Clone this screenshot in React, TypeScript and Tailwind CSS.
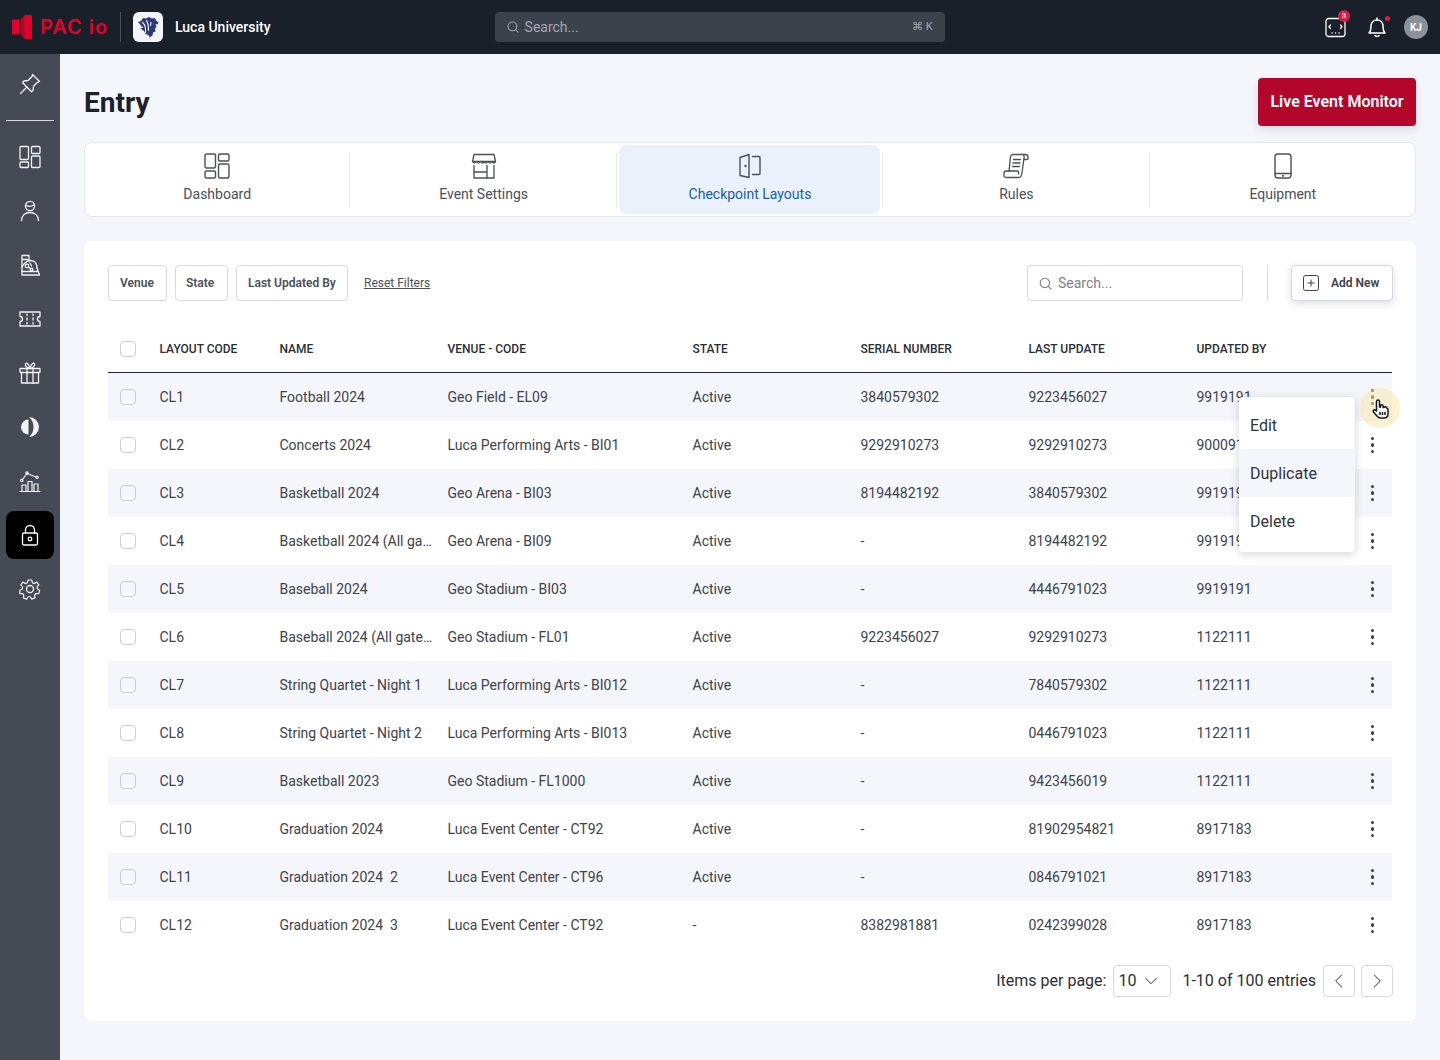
import React from "react";

const rows = [
  ["CL1", "Football 2024", "Geo Field - EL09", "Active", "3840579302", "9223456027", "9919191"],
  ["CL2", "Concerts 2024", "Luca Performing Arts - BI01", "Active", "9292910273", "9292910273", "9000919"],
  ["CL3", "Basketball 2024", "Geo Arena - BI03", "Active", "8194482192", "3840579302", "9919191"],
  ["CL4", "Basketball 2024 (All gates)", "Geo Arena - BI09", "Active", "-", "8194482192", "9919191"],
  ["CL5", "Baseball 2024", "Geo Stadium - BI03", "Active", "-", "4446791023", "9919191"],
  ["CL6", "Baseball 2024 (All gates)", "Geo Stadium - FL01", "Active", "9223456027", "9292910273", "1122111"],
  ["CL7", "String Quartet - Night 1", "Luca Performing Arts - BI012", "Active", "-", "7840579302", "1122111"],
  ["CL8", "String Quartet - Night 2", "Luca Performing Arts - BI013", "Active", "-", "0446791023", "1122111"],
  ["CL9", "Basketball 2023", "Geo Stadium - FL1000", "Active", "-", "9423456019", "1122111"],
  ["CL10", "Graduation 2024", "Luca Event Center - CT92", "Active", "-", "81902954821", "8917183"],
  ["CL11", "Graduation 2024  2", "Luca Event Center - CT96", "Active", "-", "0846791021", "8917183"],
  ["CL12", "Graduation 2024  3", "Luca Event Center - CT92", "-", "8382981881", "0242399028", "8917183"],
];

const S = ({ children, size = 24, className = "", sw = 1.5 }: { children: React.ReactNode; size?: number; className?: string; sw?: number }) => (
  <svg width={size} height={size} viewBox="0 0 24 24" fill="none" stroke="currentColor" strokeWidth={sw} strokeLinecap="round" strokeLinejoin="round" className={className}>
    {children}
  </svg>
);

const DashIcon = ({ size = 24 }: { size?: number }) => (
  <S size={size} sw={1.3}>
    <rect x="2" y="1.5" width="8.500" height="13" rx="1" />
    <rect x="13.500" y="1.500" width="8.500" height="7" rx="1" />
    <rect x="2" y="17" width="8.500" height="5.500" rx="1" />
    <rect x="13.500" y="11" width="8.500" height="11.500" rx="1" />
  </S>
);

const nav: React.ReactNode[] = [
  <DashIcon key="a" />,
  <S key="b" sw={1.3}>
    <circle cx="12" cy="7" r="4.600" />
    <path d="M7.800 6.200c2.500 1.600 5.600 1.400 8.200-.2" />
    <path d="M3.500 21.500c0-5 3.600-8 8.500-8s8.500 3 8.500 8" />
  </S>,
  <S key="c" sw={1.3}>
    <path d="M4 14V2.500h7V7" />
    <path d="M4 6.500h6" />
    <path d="M4 14c0 0 3-6.500 9-6.500 4 0 6 3.500 6 7.500" />
    <circle cx="9" cy="13" r="1.800" />
    <circle cx="13.500" cy="16.500" r="1.300" />
    <path d="M10.500 14.500l2 1M12 10l1.500 3" />
    <path d="M4 14v8h17.500l-2.500-7" />
    <path d="M4 18.500h16" />
  </S>,
  <S key="d" sw={1.3}>
    <path d="M2 5h20v4.500a2.500 2.500 0 0 0 0 5V19H2v-4.500a2.500 2.500 0 0 0 0-5z" />
    <path d="M9 7v1.500M9 11v2M9 15.500V17M15 7v1.500M15 11v2M15 15.500V17" />
  </S>,
  <S key="e" sw={1.3}>
    <rect x="2" y="7.500" width="20" height="4" rx=".5" />
    <path d="M3.500 11.500V22h17V11.500" />
    <path d="M9 7.500V22M15 7.500V22" />
    <path d="M12 7.500C9.500 7 6.500 5 7.500 3c1-1.800 3.500-.5 4.500 4.500 1-5 3.500-6.300 4.500-4.500 1 2-2 4-4.500 4.500z" />
  </S>,
  <svg key="f" width="24" height="24" viewBox="0 0 24 24" fill="none">
    <path d="M10.500 4.500a7.500 7.500 0 0 0 0 15z" fill="currentColor" />
    <path d="M11 2a10 10 0 0 1 0 20c3-2.500 4.500-6 4.500-10S14 4.500 11 2z" fill="currentColor" />
  </svg>,
  <S key="g" sw={1.2}>
    <path d="M2 22.500h20" />
    <rect x="4" y="16" width="4" height="6.500" />
    <rect x="10" y="12.500" width="4" height="10" />
    <rect x="16" y="15" width="4" height="7.500" />
    <path d="M4.500 10.500L9 4.500l9 3.500" />
    <circle cx="3.800" cy="11.500" r="1.200" />
    <circle cx="9" cy="4" r="1.200" />
    <circle cx="19" cy="8.300" r="1.200" />
  </S>,
  <S key="h" sw={1.3}>
    <rect x="4.500" y="10" width="15" height="12" rx="1.500" />
    <path d="M7.500 10V7a4.500 4.500 0 0 1 9 0v3" />
    <circle cx="12" cy="16" r="1.800" />
  </S>,
  <S key="i" sw={1.3}>
    <circle cx="12" cy="12" r="3.500" />
    <path d="M10 2h4l.6 3 2.300 1 2.600-1.700 2.400 3.200-2 2.100.3 2.400 2.600 1.500-1.200 3.800-3-.3-1.600 1.900.6 3-3.700 1.300-1.600-2.600h-2.400l-1.600 2.600-3.700-1.300.6-3-1.600-1.900-3 .3L.8 13.500l2.600-1.500.3-2.400-2-2.100L4.100 4.300 6.700 6 9 5z" transform="translate(1.200 1.200) scale(.9)" />
  </S>,
];

const tabs: [string, React.ReactNode, boolean?][] = [
  ["Dashboard", <svg key="d" width="26" height="26" viewBox="0 0 26 26" fill="none" stroke="currentColor" strokeWidth="1.400"><rect x="1" y="1" width="10.500" height="14" rx="1.500" /><rect x="14.500" y="1" width="10.500" height="7" rx="1.500" /><rect x="1" y="18" width="10.500" height="7" rx="1.500" /><rect x="14.500" y="11" width="10.500" height="14" rx="1.500" /></svg>],
  ["Event Settings", <svg key="e" width="26" height="26" viewBox="0 0 26 26" fill="none" stroke="currentColor" strokeWidth="1.300" strokeLinecap="round" strokeLinejoin="round"><path d="M3 1.500h20l1.500 7H1.500z" /><path d="M1.500 8.500c1.200 2 2.800 2 4 0 1.200 2 2.800 2 4 0 1.200 2 2.800 2 3.500 0 1.200 2 2.800 2 4 0 1.200 2 2.800 2 4 0 1 2 2.500 2 3.500 0" /><path d="M3 12.500V25h20V12.500" /><path d="M3 19h13M16 12.500V25" /></svg>],
  ["Checkpoint Layouts", <svg key="c" width="26" height="26" viewBox="0 0 26 26" fill="none" stroke="#4b5059" strokeWidth="1.400" strokeLinecap="round" strokeLinejoin="round"><path d="M3 4.500L12 1.500v23l-9-2z" /><path d="M15.500 3.500H22a1 1 0 0 1 1 1v16a1 1 0 0 1-1 1h-6.500" /><circle cx="8.500" cy="13" r=".5" fill="#4b5059" /></svg>, true],
  ["Rules", <svg key="r" width="26" height="26" viewBox="0 0 26 26" fill="none" stroke="currentColor" strokeWidth="1.300" strokeLinecap="round" strokeLinejoin="round"><path d="M6 18.500L7.500 3.500A2.500 2.500 0 0 1 10 1.500h12.500A2.500 2.500 0 0 1 25 4v1.500a1 1 0 0 1-1 1h-3" /><path d="M20 1.500c1 .5 1.300 2 1 3.500l-2 15c-.3 3-1.500 4.500-3.500 4.500H3a2 2 0 0 1-2-2v-2.500a2 2 0 0 1 2-2h11c1.500 0 2 1.500 1.500 3" /><path d="M10.500 6.500h7M10 10h7M9.500 13.500h7" /></svg>],
  ["Equipment", <svg key="q" width="26" height="26" viewBox="0 0 26 26" fill="none" stroke="currentColor" strokeWidth="1.400" strokeLinecap="round"><rect x="5" y="1" width="16" height="24" rx="3" /><path d="M5 20.500h16" /><circle cx="13" cy="22.800" r=".4" fill="currentColor" /></svg>],
];

const Check = () => <span className="block h-4 w-4 rounded-[4px] border border-[#c9ccd4]" />;

const Dots = () => (
  <span className="flex flex-col gap-[3px]">
    <span className="h-[3.500px] w-[3.500px] rounded-full bg-[#3d424b]" />
    <span className="h-[3.500px] w-[3.500px] rounded-full bg-[#3d424b]" />
    <span className="h-[3.500px] w-[3.500px] rounded-full bg-[#3d424b]" />
  </span>
);

const cols = "grid grid-cols-[51.5px_120px_168px_245px_168px_168px_168px_1fr] items-center";

export default function App() {
  return (
    <div className="flex min-h-[1060px] flex-col bg-[#f5f6fb] font-['Roboto',sans-serif] text-[#3d424b]">
      <header className="flex h-[54px] shrink-0 items-center bg-[#19202a] pl-3 pr-3">
        <svg width="20" height="24" viewBox="0 0 20 24" fill="#e4002b" className="shrink-0">
          <path d="M0 4.500h7.500v15H0z" />
          <path d="M8.500 4.200L12 1h7a1 1 0 0 1 1 1v20a1 1 0 0 1-1 1h-7l-3.500-3.200z" fill="#a80a28" />
          <path d="M12.500 0H19a1 1 0 0 1 1 1v22a1 1 0 0 1-1 1h-6.500z" />
        </svg>
        <span className="ml-2 w-[72px] font-['Inter',sans-serif] text-[20px] font-semibold leading-none tracking-[1px] text-[#e4002b]">PAC io</span>
        <span className="ml-2 h-[30px] w-px bg-[#4a4f59]" />
        <span className="ml-3 flex h-[30px] w-[30px] items-center justify-center rounded-md bg-[#f3f4fb]">
          <svg width="24" height="24" viewBox="0 0 24 24" fill="#2e3a75">
            <path d="M2 7l3-1 2-3 3 .5L13 2l3 1.500 3-.5 1 2.500 2.500 2-1 2-2-.5 1 3-1.500 1.500.5 3-2.500 1-.5 3-3 2-1-2.500-3-1-1.500-3-3-2 .5-3-1.500-1.500z" />
            <path d="M6 7c2.500 2 4 6 3.500 11M10.500 5c1.500 3 2.500 6 2 11M15 7l-.5 4M7 12l-3 1" stroke="#f3f4fb" strokeWidth="1.100" fill="none" />
          </svg>
        </span>
        <span className="ml-3 text-sm font-medium text-white">Luca University</span>
        <div className="ml-[224px] flex h-[30px] w-[450px] items-center rounded bg-[#3c424c] pl-[11px] pr-3 text-[#a2a6ae]">
          <S size={14} sw={1.800}><circle cx="11" cy="11" r="7.500" /><path d="M21 21l-4.500-4.500" /></S>
          <span className="ml-[5px] text-sm">Search...</span>
          <span className="ml-auto text-[11px]">⌘ K</span>
        </div>
        <div className="ml-auto flex items-center">
          <span className="relative text-white">
            <svg width="22" height="22" viewBox="0 0 22 22" fill="none" stroke="currentColor" strokeWidth="1.300" strokeLinecap="round" className="block">
              <rect x="1" y="2.500" width="19" height="18" rx="2.500" />
              <path d="M5.500 9L4 10.800 5.500 12.500M15.500 9L17 10.800 15.500 12.500M7 17h.2M10.500 17h.2M14 17h.2" />
            </svg>
            <span className="absolute -right-[3px] -top-[6px] flex h-3 w-3 items-center justify-center rounded-full bg-[#cf2242] text-[7px] font-medium text-white">3</span>
          </span>
          <span className="relative ml-[20px] text-white">
            <svg width="20" height="22" viewBox="0 0 20 22" fill="none" stroke="currentColor" strokeWidth="1.500" strokeLinecap="round" strokeLinejoin="round" className="block">
              <path d="M2 17c1.500-1.500 2-3 2-6.500C4 6.500 6.500 4 10 4s6 2.500 6 6.500c0 3.500.5 5 2 6.500z" />
              <path d="M10 2v2M8 19.500c.5 1.300 3.500 1.300 4 0" />
            </svg>
            <span className="absolute -right-[3px] top-0 h-[5px] w-[5px] rounded-full bg-[#e4193e]" />
          </span>
          <span className="ml-[17px] flex h-6 w-6 items-center justify-center rounded-full bg-[#8b9099] text-[10px] font-bold text-white">KJ</span>
        </div>
      </header>

      <div className="flex flex-1">
        <aside className="flex w-[60px] shrink-0 flex-col items-center bg-[#454a54] text-[#f2f3f5]">
          <div className="flex h-[67px] w-12 items-center justify-center border-b border-[#d9dbe0] pb-[6px]">
            <S sw={1.300}>
              <path d="M14.500 2.500l7 7-2 .8-4 4-.5 4-1.500 1.500-4.500-4.500L4.500 10.500 6 9l4-.5 4-4z" />
              <path d="M9 15l-6.500 6.500" />
            </S>
          </div>
          <div className="mt-[9px] flex flex-col">
            {nav.map((n, i) => (
              <div key={i} className={i === 7 ? "my-[3px] flex h-12 w-12 items-center justify-center rounded-lg bg-black text-white" : "flex h-[54px] w-12 items-center justify-center"}>
                {n}
              </div>
            ))}
          </div>
        </aside>

        <main className="flex-1 px-6 pt-6">
          <div className="flex h-12 items-center justify-between">
            <h1 className="pt-[2px] text-[28px] font-bold text-[#1c2129]">Entry</h1>
            <button className="h-12 w-[158px] rounded bg-[#b4062b] text-base font-semibold text-white shadow-[0_4px_10px_rgba(30,40,60,0.12)]">Live Event Monitor</button>
          </div>

          <div className="mt-4 h-[75px] rounded-lg border border-[#e6e8ee] bg-white py-0.5">
            <div className="-mx-px grid grid-cols-5">
              {tabs.map(([label, icon, active], i) => (
                <div key={label} className="relative flex items-center justify-center">
                  <div className={active ? "flex h-[69px] w-[261px] flex-col items-center rounded-lg bg-[#eaf1fb] pt-[8px] text-[#1a5cb0]" : "flex h-[69px] w-full flex-col items-center pt-[8px] text-[#4b5059]"}>
                    {icon}
                    <span className="mt-[5px] text-sm leading-5">{label}</span>
                  </div>
                  {i < 4 && <span className="absolute right-0 top-[8px] h-[54px] w-px bg-[#e9ebef]" />}
                </div>
              ))}
            </div>
          </div>

          <section className="relative mt-6 h-[780px] rounded-lg bg-white px-6 pt-6">
            <div className="flex items-center">
              <div className="flex items-center gap-2 text-xs font-semibold text-[#4b5059]">
                <button className="h-9 w-[59px] rounded border border-[#d5d8e0] pl-[11px] text-left">Venue</button>
                <button className="h-9 w-[53px] rounded border border-[#d5d8e0] pl-[10px] text-left">State</button>
                <button className="h-9 w-[112px] rounded border border-[#d5d8e0] pl-[11px] text-left">Last Updated By</button>
              </div>
              <a className="ml-4 text-xs text-[#4b5059] underline">Reset Filters</a>
              <div className="ml-auto flex h-9 w-[216px] items-center rounded border border-[#d5d8e0] pl-[10px] text-[#7a7f89]">
                <S size={15} sw={1.800}><circle cx="11" cy="11" r="7.500" /><path d="M21 21l-4.500-4.500" /></S>
                <span className="ml-[5px] text-sm">Search...</span>
              </div>
              <span className="ml-6 mr-[23px] h-9 w-px bg-[#d5d8e0]" />
              <button className="-mr-px flex h-9 w-[102px] items-center rounded border border-[#d5d8e0] bg-white pl-[11px] text-xs font-semibold text-[#3d424b] shadow-[0_3px_8px_rgba(30,40,60,0.15)]">
                <svg width="16" height="16" viewBox="0 0 16 16" fill="none" stroke="currentColor" strokeWidth="1"><rect x=".5" y=".5" width="15" height="15" rx="2" /><path d="M8 4.500v7M4.500 8h7" /></svg>
                <span className="ml-3">Add New</span>
              </button>
            </div>

            <div className={`${cols} mt-6 h-[48px] border-b border-[#1f242c] text-xs font-medium text-[#2a2f37]`}>
              <span className="pl-3"><Check /></span>
              <span>LAYOUT CODE</span>
              <span>NAME</span>
              <span>VENUE - CODE</span>
              <span>STATE</span>
              <span>SERIAL NUMBER</span>
              <span>LAST UPDATE</span>
              <span>UPDATED BY</span>
            </div>

            {rows.map((r, i) => (
              <div key={r[0]} className={`${cols} h-12 text-sm ${i % 2 === 0 ? "bg-[#f5f6fb]" : "bg-white"}`}>
                <span className="pl-3"><Check /></span>
                <span>{r[0]}</span>
                <span className="max-w-[155px] truncate whitespace-pre">{r[1]}</span>
                <span>{r[2]}</span>
                <span>{r[3]}</span>
                <span>{r[4]}</span>
                <span>{r[5]}</span>
                <span className="flex items-center justify-between pr-[18px]">
                  {r[6]}
                  <Dots />
                </span>
              </div>
            ))}

            <div className="-mr-px mt-4 flex h-8 items-center justify-end text-base text-[#2a2f37]">
              <span>Items per page:</span>
              <span className="ml-[7px] flex h-8 w-[58px] items-center justify-between rounded border border-[#d5d8e0] pl-[4px] pr-[11px]">
                10
                <S size={16} sw={1.500}><path d="M4 8l8 8 8-8" /></S>
              </span>
              <span className="ml-[11px]">1-10 of 100 entries</span>
              <span className="ml-[7px] flex h-8 w-8 items-center justify-center rounded border border-[#d5d8e0]">
                <S size={16} sw={1.500}><path d="M16 3l-9 9 9 9" /></S>
              </span>
              <span className="ml-[6px] flex h-8 w-8 items-center justify-center rounded border border-[#d5d8e0]">
                <S size={16} sw={1.500}><path d="M8 3l9 9-9 9" /></S>
              </span>
            </div>

            <div className="absolute left-[1155px] top-[156px] w-[116px] overflow-hidden rounded bg-white text-base text-[#2f343c] shadow-[0_2px_10px_rgba(30,40,60,0.2)]">
              <div className="flex h-[52px] items-center pl-[11px] pt-[6px]">Edit</div>
              <div className="flex h-12 items-center bg-[#f5f6fb] pl-[11px] pt-[2px]">Duplicate</div>
              <div className="flex h-12 items-center pl-[11px] pt-[2px]">Delete</div>
              <div className="h-[7px]" />
            </div>

            <div className="absolute left-[1276px] top-[147px] h-10 w-10 rounded-full bg-[#f9e3a4]/50" />
            <svg width="18" height="20" viewBox="0 0 18 20" className="absolute left-[1287px] top-[158px]" fill="#fff" stroke="#15191f" strokeWidth="1.500" strokeLinejoin="round">
              <path d="M5.500 12V2.500a1.500 1.500 0 0 1 3 0V8l1 .2V7a1.300 1.300 0 0 1 2.600 0v1.500l1-.1a1.300 1.300 0 0 1 2.400.6c.5 0 1.500.6 1.500 1.500v4c0 2.500-1.500 4.500-4 4.500H9.500c-1.500 0-2.500-.8-3.500-2L2.500 13c-1-1.500.8-3 2-1.800z" />
              <path d="M9 13v3M11.500 13v3M14 13v3" fill="none" />
            </svg>
          </section>
        </main>
      </div>
    </div>
  );
}
